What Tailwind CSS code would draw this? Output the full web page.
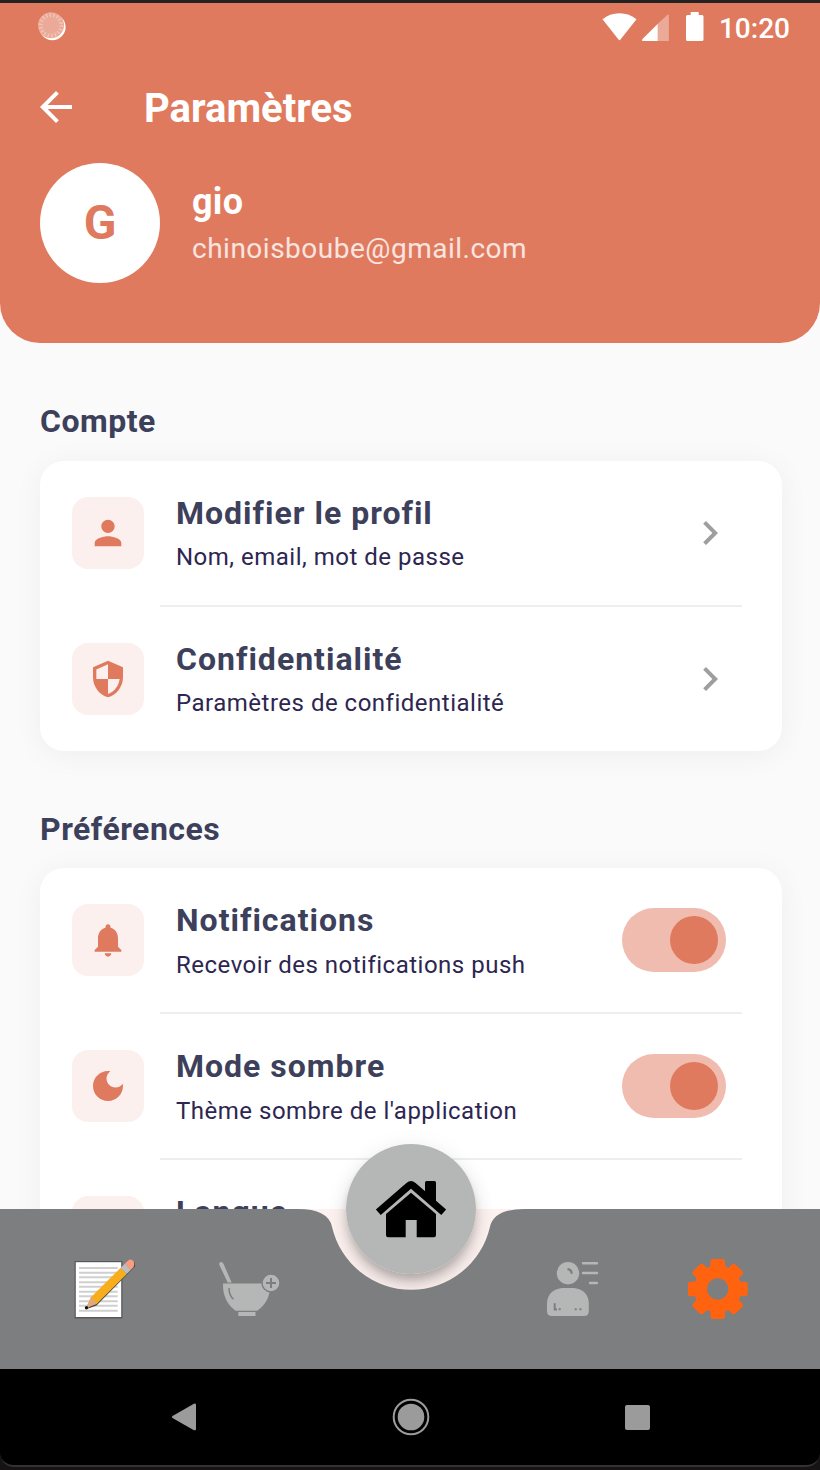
<!DOCTYPE html>
<html lang="fr">
<head>
<meta charset="utf-8">
<title>Paramètres</title>
<script src="https://cdn.jsdelivr.net/npm/@tailwindcss/browser@4"></script>
</head>
<body class="w-[820px] h-[1470px] overflow-hidden flex flex-col bg-[#fafafa] font-['Roboto',sans-serif]">
<div class="h-[3px] bg-[#222] shrink-0"></div>

<header class="h-[340px] shrink-0 bg-[#df7a5e] rounded-b-[40px] text-white flex flex-col">
  <div class="h-[48px] flex items-center justify-between pl-[37px] pr-[30px]">
    <svg class="w-[30px] h-[30px]" viewBox="0 0 30 30">
      <circle cx="15.4" cy="15" r="13.2" fill="#fff"/>
      <circle cx="14" cy="13.3" r="13" fill="#eba997"/>
      <circle cx="14" cy="13.3" r="10.3" fill="none" stroke="#f1c4b8" stroke-width="4" stroke-dasharray="1.5 2.1"/>
    </svg>
    <div class="flex items-center">
      <svg class="w-[102px] h-[30px] mr-[15px]" viewBox="0 0 102 30" fill="#fff">
        <path d="M.5 7.200Q7.500 1.200 17.500 1.200T34.500 7.200L18.500 27.600Q17.500 28.800 16.500 27.600Z"/>
        <path d="M65 3.200Q66.900 1.500 66.900 3.500V29H55V12.600Z" fill="#eba997"/>
        <path d="M55.600 12V29H41.200Q39.300 29 40.500 27Z"/>
        <path d="M88.700 0h8v3h3.300q1.500 0 1.500 1.500V27.500q0 1.500-1.500 1.500H85.500q-1.500 0-1.500-1.500V4.500Q84 3 85.500 3h3.200z"/>
      </svg>
      <span class="text-[28px] leading-none font-medium pt-[4px]">10:20</span>
    </div>
  </div>
  <div class="h-[109px] flex items-center pl-[32px] pt-[1px]">
    <svg class="w-[48px] h-[50px] mr-[64px] pt-[2px]" viewBox="0 0 24 24" fill="#fff"><path d="M20 11H7.830l5.590-5.590L12 4l-8 8 8 8 1.410-1.410L7.830 13H20v-2z"/></svg>
    <h1 class="text-[40px] leading-[48px] font-bold pt-[5px]">Paramètres</h1>
  </div>
  <div class="flex items-center gap-[32px] pl-[40px] mt-[3px]">
    <div class="w-[120px] h-[120px] rounded-full bg-white text-[#df7a5e] text-[48px] font-bold flex items-center justify-center">G</div>
    <div class="pt-[4px]">
      <div class="text-[36px] leading-[47px] font-bold tracking-[0.3px]">gio</div>
      <div class="text-[28px] leading-[45px] tracking-[0.5px] text-white/80">chinoisboube@gmail.com</div>
    </div>
  </div>
</header>

<main class="h-[1026px] shrink-0 relative overflow-hidden pl-[40px] pr-[38px] pt-[58px] text-[#3d405b]">
  <h2 class="text-[32px] leading-[40px] font-bold tracking-[0.5px] mb-[20px]">Compte</h2>
  <section class="bg-white rounded-[24px] shadow-[0_4px_30px_rgba(0,0,0,0.05)]">
    <div class="h-[144px] flex items-center pl-[32px] pr-[48px]">
      <div class="w-[72px] h-[72px] rounded-[16px] bg-[#fcf0ee] flex items-center justify-center mr-[32px]"><svg class="w-[40px] h-[40px]" viewBox="0 0 24 24" fill="#df7a5e"><path d="M12 12c2.210 0 4-1.790 4-4s-1.790-4-4-4-4 1.790-4 4 1.790 4 4 4zm0 2c-2.670 0-8 1.340-8 4v2h16v-2c0-2.660-5.330-4-8-4z"/></svg></div>
      <div class="flex-1 pt-[2px]"><div class="text-[32px] leading-[46px] font-bold tracking-[1px]">Modifier le profil</div><div class="text-[24px] leading-[42px] tracking-[0.5px] text-[#2d2650]">Nom, email, mot de passe</div></div>
      <svg class="w-[48px] h-[48px]" viewBox="0 0 24 24" fill="#9e9e9e"><path d="M10 6 8.590 7.410 13.170 12l-4.580 4.590L10 18l6-6z"/></svg>
    </div>
    <div class="h-[2px] bg-[#eee] ml-[120px] mr-[40px]"></div>
    <div class="h-[144px] flex items-center pl-[32px] pr-[48px]">
      <div class="w-[72px] h-[72px] rounded-[16px] bg-[#fcf0ee] flex items-center justify-center mr-[32px]"><svg class="w-[40px] h-[40px]" viewBox="0 0 24 24" fill="#df7a5e"><path d="M12 1 3 5v6c0 5.550 3.840 10.740 9 12 5.160-1.260 9-6.450 9-12V5l-9-4zm0 10.990h7c-.530 4.120-3.280 7.790-7 8.940V12H5V6.300l7-3.110v8.800z"/></svg></div>
      <div class="flex-1 pt-[2px]"><div class="text-[32px] leading-[46px] font-bold tracking-[1px]">Confidentialité</div><div class="text-[24px] leading-[42px] tracking-[0.5px] text-[#2d2650]">Paramètres de confidentialité</div></div>
      <svg class="w-[48px] h-[48px]" viewBox="0 0 24 24" fill="#9e9e9e"><path d="M10 6 8.590 7.410 13.170 12l-4.580 4.590L10 18l6-6z"/></svg>
    </div>
  </section>

  <h2 class="text-[32px] leading-[40px] font-bold tracking-[0.5px] mt-[58px] mb-[19px]">Préférences</h2>
  <section class="bg-white rounded-[24px] shadow-[0_4px_30px_rgba(0,0,0,0.05)]">
    <div class="h-[144px] flex items-center pl-[32px] pr-[56px]">
      <div class="w-[72px] h-[72px] rounded-[16px] bg-[#fcf0ee] flex items-center justify-center mr-[32px]"><svg class="w-[40px] h-[40px]" viewBox="0 0 24 24" fill="#df7a5e"><path d="M12 22c1.100 0 2-.9 2-2h-4c0 1.100.890 2 2 2zm6-6v-5c0-3.070-1.640-5.640-4.500-6.320V4c0-.830-.670-1.500-1.500-1.500s-1.500.670-1.500 1.500v.680C7.630 5.360 6 7.920 6 11v5l-2 2v1h16v-1l-2-2z"/></svg></div>
      <div class="flex-1 pt-[5px]"><div class="text-[32px] leading-[46px] font-bold tracking-[1px]">Notifications</div><div class="text-[24px] leading-[45px] tracking-[0.5px] text-[#2d2650]">Recevoir des notifications push</div></div>
      <div class="w-[104px] h-[64px] rounded-full bg-[#f0bcb0] flex items-center justify-end pr-[8px]"><div class="w-[48px] h-[48px] rounded-full bg-[#df7a5e]"></div></div>
    </div>
    <div class="h-[2px] bg-[#eee] ml-[120px] mr-[40px]"></div>
    <div class="h-[144px] flex items-center pl-[32px] pr-[56px]">
      <div class="w-[72px] h-[72px] rounded-[16px] bg-[#fcf0ee] flex items-center justify-center mr-[32px]"><svg class="w-[40px] h-[40px]" viewBox="0 0 24 24" fill="#df7a5e"><path d="M12 3c-4.970 0-9 4.030-9 9s4.030 9 9 9 9-4.030 9-9c0-.460-.040-.920-.1-1.360-.980 1.370-2.580 2.260-4.400 2.260-2.980 0-5.400-2.420-5.400-5.400 0-1.810.890-3.420 2.260-4.400C12.920 3.040 12.460 3 12 3z"/></svg></div>
      <div class="flex-1 pt-[5px]"><div class="text-[32px] leading-[46px] font-bold tracking-[1px]">Mode sombre</div><div class="text-[24px] leading-[45px] tracking-[0.5px] text-[#2d2650]">Thème sombre de l'application</div></div>
      <div class="w-[104px] h-[64px] rounded-full bg-[#f0bcb0] flex items-center justify-end pr-[8px]"><div class="w-[48px] h-[48px] rounded-full bg-[#df7a5e]"></div></div>
    </div>
    <div class="h-[2px] bg-[#eee] ml-[120px] mr-[40px]"></div>
    <div class="h-[144px] flex items-center pl-[32px]">
      <div class="w-[72px] h-[72px] rounded-[16px] bg-[#fcf0ee] mr-[32px]"></div>
      <div class="h-[86px] text-[32px] leading-[46px] font-bold tracking-[1px]">Langue</div>
    </div>
  </section>

  <!-- Bottom navigation with the docked home button -->
  <nav class="absolute left-0 bottom-0 w-[820px] h-[160px] bg-[#fdf2f0]">
    <div class="absolute left-[346px] top-[-65px] w-[130px] h-[130px] rounded-full shadow-[0_7px_10px_-2px_rgba(0,0,0,0.2),0_12px_20px_rgba(0,0,0,0.12),0_2px_24px_rgba(0,0,0,0.06)]"></div>
    <svg class="absolute inset-0 w-[820px] h-[160px]" viewBox="0 0 820 160"><path fill="#7d7e80" d="M0 0H298Q328 0 332 17.700A81 81 0 0 0 490 17.700Q494 0 524 0H820V160H0Z"/></svg>
    <div class="absolute left-[346px] top-[-65px] w-[130px] h-[130px] rounded-full bg-[#b5b7b6]">
      <svg class="w-[130px] h-[130px]" viewBox="0 0 130 130">
        <path d="M32.300 68.300 62.800 41.800Q65 40 67.200 41.800L97.700 68.300" fill="none" stroke="#000" stroke-width="7.400"/>
        <path d="M79 49V38.500Q79 37 80.500 37H88.500Q90 37 90 38.500V60Z"/>
        <path d="M65 48.700 90 70V91Q90 93.200 88 93.200H70.700V76H59.700V93.200H42Q40 93.200 40 91V70Z"/>
      </svg>
    </div>
    <div class="relative h-[160px] flex justify-between items-center pl-[74px] pr-[72px]">
      <div class="flex gap-[84px]">
        <svg class="w-[62px] h-[60px] -mr-[2px]" viewBox="0 0 62 60">
          <rect x=".6" y="2" width="47.900" height="57.500" fill="#58595b"/>
          <rect x="1.800" y="3.200" width="45.400" height="54.800" fill="#fff"/>
          <path d="M5 9H43.700M5 13.700H43.700M5 18.300H43.700M5 23.200H43.700M5 27.800H43.700M5 32.700H43.700M5 37.300H43.700M5 42.200H43.700M5 46.800H43.700M5 51.700H43.700" stroke="#cfcfcf" stroke-width="2"/>
          <path d="M13 50 22.500 46.500 61 7.500V3.500L57 3Z" fill="#454545"/>
          <path d="M12 49 17 38.200 46.600 8.800 52.800 15 22.600 45Z" fill="#f8ad1c"/>
          <path d="M12 49 17 38.200 22.900 44.600Z" fill="#dfa882"/>
          <circle cx="12.500" cy="48.700" r="1.700" fill="#111"/>
          <path d="M46.600 9 51 4.600 57 10.800 52.700 15.100Z" fill="#bdbfbf"/>
          <path d="M51 4.600 54.300 1.400Q56.500-.5 59 1.800T59.400 8.200L56.800 11Z" fill="#f99c80"/>
        </svg>
        <svg class="w-[62px] h-[60px] -mr-[2px]" viewBox="0 0 62 60" fill="#b5b7b6">
          <path d="M1.300 5.800Q.8 3.300 3 3.100 4.700 3 5.600 5L13.600 23.400H9.700Z"/>
          <path d="M5 24.400H52Q53 42 39.300 51.700H17.500Q4.500 42 5 24.400Z"/>
          <rect x="20.300" y="53" width="17.200" height="4"/>
          <path d="M11 29Q11 36.500 15.500 40.200" fill="none" stroke="#7d7e80" stroke-width="1.500"/>
          <circle cx="53" cy="24" r="9" stroke="#7d7e80" stroke-width="1.400"/>
          <path d="M48 24H58M53 19V29" stroke="#7d7e80" stroke-width="2"/>
        </svg>
      </div>
      <div class="flex gap-[86px]">
        <svg class="w-[60px] h-[60px]" viewBox="0 0 60 60" fill="#b5b7b6">
          <circle cx="26" cy="14.200" r="11.200"/>
          <path d="M20 29H32Q46.700 31 46.800 45V52.500Q46.500 57 42 57H10Q5.200 57 5 52.500V45Q5.200 31 20 29Z"/>
          <path d="M41 4.300H55M41 14H55M48 24H55" stroke="#b5b7b6" stroke-width="2.400" stroke-linecap="round"/>
          <path d="M25.500 10.200Q29.500 10.500 29.700 14.700" fill="none" stroke="#7d7e80" stroke-width="2.200"/>
          <path d="M12.700 44.200V50.500H15" fill="none" stroke="#7d7e80" stroke-width="2"/>
          <path d="M16.700 49.300h2v2h-2zM32.700 49.300h2v2h-2zM37.400 49.300h2v2h-2z" fill="#7d7e80"/>
        </svg>
        <svg class="w-[60px] h-[60px]" viewBox="0.3 0 60 60">
          <path fill="#ff6310" fill-rule="evenodd" d="M30 6.300A23.700 23.700 0 1 1 29.990 6.300ZM30 19.300A10.700 10.700 0 1 0 30.010 19.300Z"/>
          <g fill="#ff6310">
            <path id="tooth" d="M22.700 14V3Q22.700 0 25.700 0H34.300Q37.300 0 37.300 3V14Z"/>
            <use href="#tooth" transform="rotate(45 30 30)"/>
            <use href="#tooth" transform="rotate(90 30 30)"/>
            <use href="#tooth" transform="rotate(135 30 30)"/>
            <use href="#tooth" transform="rotate(180 30 30)"/>
            <use href="#tooth" transform="rotate(225 30 30)"/>
            <use href="#tooth" transform="rotate(270 30 30)"/>
            <use href="#tooth" transform="rotate(315 30 30)"/>
          </g>
        </svg>
      </div>
    </div>
  </nav>
</main>

<footer class="flex-1 bg-[#151313] flex flex-col">
  <div class="h-[98px] bg-black border-b-2 border-[#333] rounded-b-[14px] flex items-center justify-between pl-[171px] pr-[170px]">
    <svg class="w-[26px] h-[28px]" viewBox="0 0 26 28" fill="#9b9b9b"><path d="M1.500 13 22.500.900Q25 0 25 2V26Q25 28 22.500 27L1.500 15Q0 14 1.500 13Z"/></svg>
    <svg class="w-[38px] h-[38px] -ml-[1px]" viewBox="0 0 38 38"><circle cx="19" cy="19" r="17.300" fill="none" stroke="#9b9b9b" stroke-width="2"/><circle cx="19" cy="19" r="13.300" fill="#9b9b9b"/></svg>
    <div class="w-[25px] h-[25px] bg-[#9b9b9b] rounded-[2px]"></div>
  </div>
</footer>
</body>
</html>
